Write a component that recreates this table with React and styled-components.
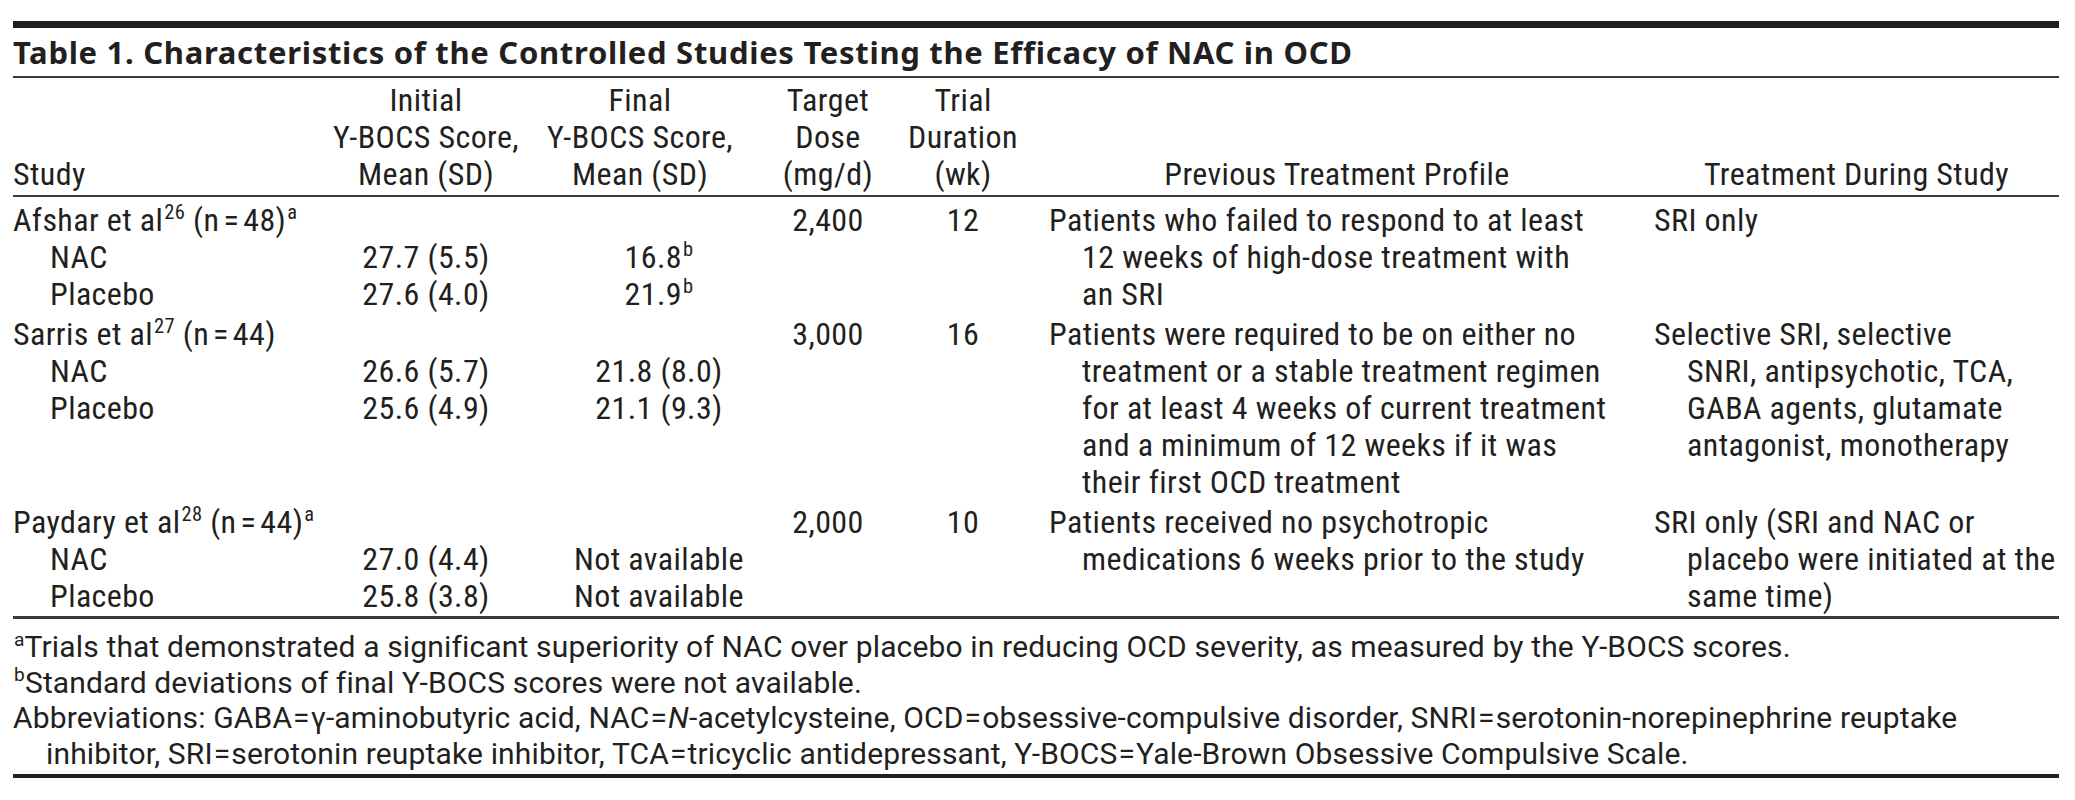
import React from 'react';
import styled, { createGlobalStyle } from 'styled-components';

const Global = createGlobalStyle`
  html, body { margin: 0; padding: 0; background: #ffffff; }
  body {
    font-family: "Roboto Condensed", "Roboto", "Liberation Sans", sans-serif;
    font-stretch: condensed;
    color: #231f20;
  }
`;

const Page = styled.div`
  width: 2075px;
  height: 800px;
  box-sizing: border-box;
  padding: 21px 16px 0 13px;
`;

const Table = styled.div`
  width: 2046px;
  border-top: 7px solid #231f20;
`;

const Title = styled.div`
  font-family: "Noto Sans", "Open Sans", sans-serif;
  font-stretch: normal;
  font-weight: 700;
  font-size: 31px;
  letter-spacing: 0.7px;
  line-height: 48px;
  height: 48px;
  white-space: nowrap;
  border-bottom: 2px solid #3a3a3a;
`;

const Grid = styled.div`
  display: grid;
  grid-template-columns: 307px 212px 216px 160px 110px 636px 405px;
  font-size: 32px;
  letter-spacing: 0.4px;
  line-height: 37px;
`;

const HeaderGrid = styled(Grid)`
  padding: 4px 0 2px;
  border-bottom: 2px solid #3a3a3a;
  align-items: end;
`;

const Body = styled.div`
  padding: 5px 0 1px;
  display: flex;
  flex-direction: column;
  gap: 3px;
  border-bottom: 3px solid #3a3a3a;
`;

const Cell = styled.div`
  display: flex;
  flex-direction: column;
  align-items: ${p => (p.$center ? 'center' : 'flex-start')};
  padding-left: ${p => p.$pl || 0}px;
  padding-right: ${p => p.$pr || 0}px;
`;

const Line = styled.div`
  white-space: nowrap;
  height: 37px;
  padding-left: ${p => (p.$indent ? p.$indent : 0)}px;
`;

const Sup = styled.sup`
  font-size: 0.64em;
  line-height: 0;
  vertical-align: 0.58em;
  margin-left: 1px;
`;

const EqSign = styled.span`
  margin: 0 ${p => p.$gap}px;
`;

const Notes = styled.div`
  padding: 10px 0 3px;
  font-family: "Roboto", "Liberation Sans", sans-serif;
  font-stretch: normal;
  font-size: 30px;
  letter-spacing: 0.15px;
  line-height: 35.5px;
  border-bottom: 4px solid #231f20;
`;

const Note = styled.div`
  white-space: nowrap;
  padding-left: ${p => (p.$indent ? 33 : 0)}px;
`;

const Eq = ({ gap = 1 }) => <EqSign $gap={gap}>=</EqSign>;

const studies = [
  {
    name: 'Afshar et al',
    ref: '26',
    n: '48',
    mark: 'a',
    arms: [
      { arm: 'NAC', init: '27.7 (5.5)', fin: '16.8', finSup: 'b' },
      { arm: 'Placebo', init: '27.6 (4.0)', fin: '21.9', finSup: 'b' },
    ],
    dose: '2,400',
    dur: '12',
    prev: [
      'Patients who failed to respond to at least',
      '12 weeks of high-dose treatment with',
      'an SRI',
    ],
    during: ['SRI only'],
  },
  {
    name: 'Sarris et al',
    ref: '27',
    n: '44',
    mark: '',
    arms: [
      { arm: 'NAC', init: '26.6 (5.7)', fin: '21.8 (8.0)' },
      { arm: 'Placebo', init: '25.6 (4.9)', fin: '21.1 (9.3)' },
    ],
    dose: '3,000',
    dur: '16',
    prev: [
      'Patients were required to be on either no',
      'treatment or a stable treatment regimen',
      'for at least 4 weeks of current treatment',
      'and a minimum of 12 weeks if it was',
      'their first OCD treatment',
    ],
    during: [
      'Selective SRI, selective',
      'SNRI, antipsychotic, TCA,',
      'GABA agents, glutamate',
      'antagonist, monotherapy',
    ],
  },
  {
    name: 'Paydary et al',
    ref: '28',
    n: '44',
    mark: 'a',
    arms: [
      { arm: 'NAC', init: '27.0 (4.4)', fin: 'Not available' },
      { arm: 'Placebo', init: '25.8 (3.8)', fin: 'Not available' },
    ],
    dose: '2,000',
    dur: '10',
    prev: [
      'Patients received no psychotropic',
      'medications 6 weeks prior to the study',
    ],
    during: [
      'SRI only (SRI and NAC or',
      'placebo were initiated at the',
      'same time)',
    ],
  },
];

const StudyGroup = ({ s }) => (
  <Grid>
    <Cell>
      <Line>
        {s.name}
        <Sup>{s.ref}</Sup> (n<Eq gap={4} />{s.n})
        {s.mark && <Sup>{s.mark}</Sup>}
      </Line>
      {s.arms.map(a => (
        <Line key={a.arm} $indent={37}>
          {a.arm}
        </Line>
      ))}
    </Cell>
    <Cell $center>
      <Line />
      {s.arms.map(a => (
        <Line key={a.arm}>{a.init}</Line>
      ))}
    </Cell>
    <Cell $center $pl={38}>
      <Line />
      {s.arms.map(a => (
        <Line key={a.arm}>
          {a.fin}
          {a.finSup && <Sup>{a.finSup}</Sup>}
        </Line>
      ))}
    </Cell>
    <Cell $center>
      <Line>{s.dose}</Line>
    </Cell>
    <Cell $center>
      <Line>{s.dur}</Line>
    </Cell>
    <Cell $pl={31}>
      {s.prev.map((t, i) => (
        <Line key={i} $indent={i ? 33 : 0}>
          {t}
        </Line>
      ))}
    </Cell>
    <Cell>
      {s.during.map((t, i) => (
        <Line key={i} $indent={i ? 33 : 0}>
          {t}
        </Line>
      ))}
    </Cell>
  </Grid>
);

export default function App() {
  return (
    <Page>
      <Global />
      <Table>
        <Title>Table 1. Characteristics of the Controlled Studies Testing the Efficacy of NAC in OCD</Title>
        <HeaderGrid>
          <Cell>
            <Line>Study</Line>
          </Cell>
          <Cell $center>
            <Line>Initial</Line>
            <Line>Y-BOCS Score,</Line>
            <Line>Mean (SD)</Line>
          </Cell>
          <Cell $center>
            <Line>Final</Line>
            <Line>Y-BOCS Score,</Line>
            <Line>Mean (SD)</Line>
          </Cell>
          <Cell $center>
            <Line>Target</Line>
            <Line>Dose</Line>
            <Line>(mg/d)</Line>
          </Cell>
          <Cell $center>
            <Line>Trial</Line>
            <Line>Duration</Line>
            <Line>(wk)</Line>
          </Cell>
          <Cell $center $pl={31} $pr={29}>
            <Line>Previous Treatment Profile</Line>
          </Cell>
          <Cell $center>
            <Line>Treatment During Study</Line>
          </Cell>
        </HeaderGrid>
        <Body>
          {studies.map(s => (
            <StudyGroup key={s.name} s={s} />
          ))}
        </Body>
        <Notes>
          <Note>
            <Sup>a</Sup>Trials that demonstrated a significant superiority of NAC over placebo in reducing OCD severity, as measured by the Y-BOCS scores.
          </Note>
          <Note>
            <Sup>b</Sup>Standard deviations of final Y-BOCS scores were not available.
          </Note>
          <Note>
            Abbreviations: GABA<Eq />γ-aminobutyric acid, NAC<Eq /><i>N</i>-acetylcysteine, OCD<Eq />obsessive-compulsive disorder, SNRI<Eq />serotonin-norepinephrine reuptake
          </Note>
          <Note $indent>
            inhibitor, SRI<Eq />serotonin reuptake inhibitor, TCA<Eq />tricyclic antidepressant, Y-BOCS<Eq />Yale-Brown Obsessive Compulsive Scale.
          </Note>
        </Notes>
      </Table>
    </Page>
  );
}
